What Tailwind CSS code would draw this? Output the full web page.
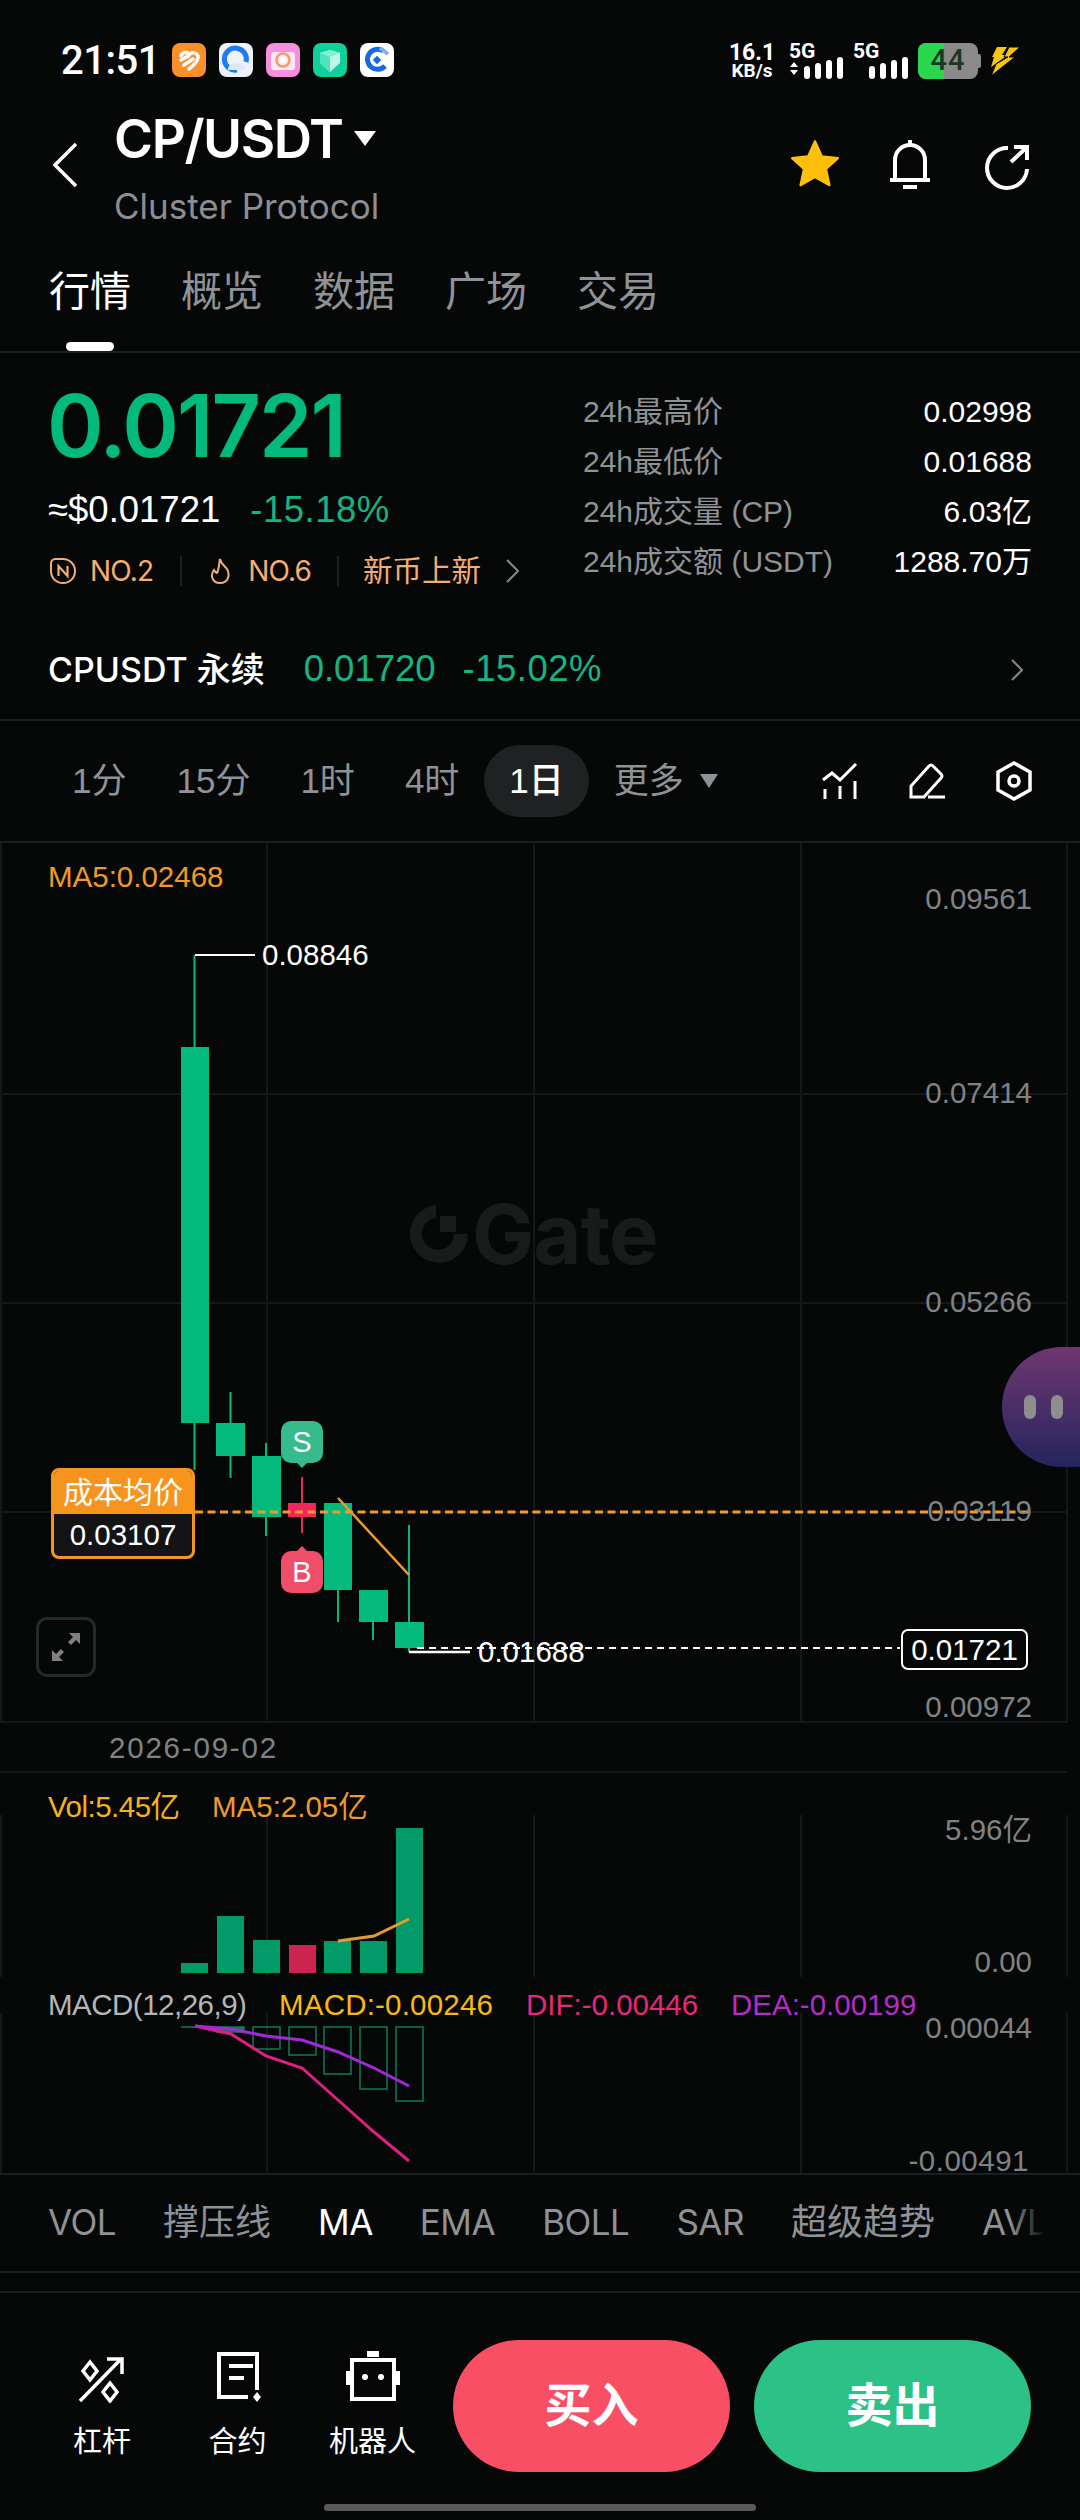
<!DOCTYPE html>
<html lang="zh">
<head>
<meta charset="utf-8">
<script src="https://cdn.jsdelivr.net/npm/@tailwindcss/browser@4"></script>
</head>
<body class="bg-[#060808]">
<div class="w-[1080px] h-[2520px] overflow-hidden bg-[#060808] text-white [font-family:'Liberation_Sans','Noto_Sans_CJK_SC',sans-serif]">

  <!-- status bar -->
  <div class="h-[100px] flex items-start pt-[43px] pl-[61px] pr-[60px]">
    <div class="text-[40px] leading-[36px] font-medium tracking-[-0.5px] w-[111px] [font-family:Roboto,sans-serif]">21:51</div>
    <div class="flex gap-[13px]">
      <svg class="w-[34px] h-[34px]" viewBox="0 0 34 34"><rect width="34" height="34" rx="8" fill="#fb8f2e"/><path d="M9 13c2-5 7-4 8-1 2-3 7-3 9 1 1 4-5 10-9 13" fill="none" stroke="#fff" stroke-width="3.500" stroke-linecap="round"/><path d="M9 17l7-4M12 22l9-6" stroke="#fff" stroke-width="3.500" stroke-linecap="round"/></svg>
      <svg class="w-[34px] h-[34px]" viewBox="0 0 34 34"><rect width="34" height="34" rx="8" fill="#eef3fa"/><path d="M27 19a11 11 0 1 0-9 8" fill="none" stroke="#1f7bf2" stroke-width="5"/><path d="M9 27c0-5 5-8 9-6 3-2 8 0 8 6z" fill="#dfe9f6"/></svg>
      <svg class="w-[34px] h-[34px]" viewBox="0 0 34 34"><rect width="34" height="34" rx="8" fill="#f68fdc"/><rect x="5" y="9" width="24" height="18" rx="3" fill="#fde6f6"/><circle cx="17" cy="17" r="6.500" fill="none" stroke="#f59a6c" stroke-width="2.500"/><circle cx="17" cy="17" r="3" fill="#fff"/></svg>
      <svg class="w-[34px] h-[34px]" viewBox="0 0 34 34"><rect width="34" height="34" rx="8" fill="#0fcf9d"/><path d="M7 10l10-3 10 3v10l-10 9-10-9z" fill="#bdf6e6"/><path d="M7 10l10 4 10-4-10-3z" fill="#7fefd2"/><path d="M17 14v15l-10-9V10z" fill="#4fe3bd"/></svg>
      <svg class="w-[34px] h-[34px]" viewBox="0 0 34 34"><rect width="34" height="34" rx="8" fill="#fff"/><path d="M25 23a10 10 0 1 1-2-15" fill="none" stroke="#1769e0" stroke-width="5"/><rect x="14" y="14" width="6" height="6" transform="rotate(45 17 17)" fill="#1769e0"/><path d="M20 5l8 6" stroke="#7fb0f0" stroke-width="4"/></svg>
    </div>
    <div class="ml-auto flex items-start">
      <div class="w-[44px] flex flex-col items-center font-bold [font-family:Roboto,sans-serif]"><span class="text-[23px] leading-[20px]">16.1</span><span class="text-[19px] leading-[16px]">KB/s</span></div>
      <div class="ml-[15px] w-[54px] relative h-[36px]">
        <span class="absolute left-0 top-0 text-[21px] leading-[16px] font-bold [font-family:Roboto,sans-serif]">5G</span>
        <svg class="absolute left-0 top-[14px]" width="54" height="22" viewBox="0 0 54 22"><path d="M1 10l4-5 4 5zM1 13l4 5 4-5z" fill="#fff"/><rect x="15" y="9" width="6" height="13" rx="3" fill="#fff"/><rect x="26" y="6" width="6" height="16" rx="3" fill="#fff"/><rect x="37" y="3" width="6" height="19" rx="3" fill="#fff"/><rect x="48" y="0" width="6" height="22" rx="3" fill="#fff"/></svg>
      </div>
      <div class="ml-[10px] w-[55px] relative h-[36px]">
        <span class="absolute left-0 top-0 text-[21px] leading-[16px] font-bold [font-family:Roboto,sans-serif]">5G</span>
        <svg class="absolute left-0 top-[14px]" width="55" height="22" viewBox="0 0 55 22"><rect x="16" y="9" width="6" height="13" rx="3" fill="#fff"/><rect x="27" y="6" width="6" height="16" rx="3" fill="#fff"/><rect x="38" y="3" width="6" height="19" rx="3" fill="#fff"/><rect x="49" y="0" width="6" height="22" rx="3" fill="#fff"/></svg>
      </div>
      <div class="ml-[10px] w-[63px] h-[36px] flex items-center">
        <div class="w-[60px] h-[36px] rounded-[8px] overflow-hidden flex bg-[#8a8a8a] relative">
          <div class="w-[26px] bg-[#2bd64f]"></div>
          <span class="absolute inset-0 flex items-center justify-center text-[29px] font-medium tracking-[1px] text-[#1f3524] [font-family:Roboto,sans-serif]">44</span>
        </div>
        <div class="w-[3px] h-[14px] bg-[#8a8a8a] rounded-r-[2px]"></div>
      </div>
      <svg class="ml-[9px] mt-[3px]" width="30" height="30" viewBox="0 0 30 30"><path d="M7 1h10L12 9h6L1 21 4 11H2z" fill="#f6c411"/><path d="M19 1h11L19 11h6L1 30l5-12 12-7h-4z" fill="#f6c411" stroke="#060808" stroke-width="1"/></svg>
    </div>
  </div>

  <!-- header -->
  <div class="h-[140px] flex pl-[53px] pr-[50px] [font-family:Inter,sans-serif]">
    <svg class="w-[24px] h-[46px] mt-[42px]" viewBox="0 0 24 46" fill="none" stroke="#fff" stroke-width="3.500"><path d="M23 2L2 23l21 21"/></svg>
    <div class="ml-[37px] flex flex-col">
      <div class="flex items-center mt-[12px]">
        <span class="text-[53px] leading-[54px] font-semibold tracking-[-1.400px]">CP/USDT</span>
        <svg class="ml-[11px] mt-[-2px]" width="22" height="15" viewBox="0 0 22 15"><path d="M0 0h22L11 15z" fill="#fff"/></svg>
      </div>
      <div class="text-[35px] leading-[40px] mt-[20px] text-[#8b8e93]">Cluster Protocol</div>
    </div>
    <div class="ml-auto flex items-start mt-[38px]">
      <svg class="w-[52px] h-[52px]" viewBox="0 0 24 24"><path d="M12 1.500l3.200 7 7.400.8-5.500 5 1.600 7.500L12 18l-6.700 3.800 1.600-7.500-5.500-5 7.400-.8z" fill="#ffbf0a" stroke="#ffbf0a" stroke-linejoin="round"/></svg>
      <svg class="ml-[47px] w-[44px] h-[52px]" viewBox="0 0 44 52" fill="none" stroke="#fff" stroke-width="4"><path d="M2 42h40M7 42V22a15 15 0 0 1 30 0v20M22 7V2M15 49h14"/></svg>
      <svg class="ml-[52px] w-[46px] h-[46px] mt-[6px]" viewBox="0 0 46 46" fill="none" stroke="#fff" stroke-width="4"><path d="M24 4A20 20 0 1 0 43 25M27 18L43 3M30 3h13v13"/></svg>
    </div>
  </div>

  <!-- tabs -->
  <div class="h-[113px] border-b-2 border-[#1c1f21] pt-[31px] pl-[49px] flex gap-[50px] text-[41px] leading-[42px] text-[#8f9296]">
    <div class="flex flex-col items-center text-white"><span>行情</span><span class="mt-[29px] w-[48px] h-[9px] rounded-full bg-white"></span></div>
    <span>概览</span><span>数据</span><span>广场</span><span>交易</span>
  </div>

  <!-- price block -->
  <div class="h-[267px] flex">
    <div class="w-[583px] pl-[47px] pt-[30px]">
      <div class="text-[86px] leading-[86px] font-semibold tracking-[-2px] text-[#02ba7c] [font-family:Inter,sans-serif]">0.01721</div>
      <div class="mt-[20px] h-[42px] flex items-center leading-[42px]"><span class="ml-[1px] text-[36.500px]">≈$0.01721</span><span class="ml-[30px] text-[36.500px] tracking-[0.5px] text-[#14b484]">-15.18%</span></div>
      <div class="mt-[25px] h-[30px] flex items-center text-[28px] leading-[30px] text-[#f4ae74]">
        <svg class="ml-[3px] w-[26px] h-[26px]" viewBox="0 0 26 26" fill="none" stroke="#f4ae74" stroke-width="2"><path d="M13 1a12 12 0 0 1 12 12c0 7-5 12-12 12S1 20 1 13V5c0-2 2-4 4-4z"/><path d="M8.500 18V8l9 10V8" stroke-width="2.200"/></svg>
        <span class="ml-[14px] tracking-[-0.8px] [font-family:Inter,sans-serif]">NO.2</span>
        <span class="ml-[27px] w-[2px] h-[30px] bg-[#1e2022]"></span>
        <svg class="ml-[28px] w-[21px] h-[26px]" viewBox="0 0 21 26" fill="none" stroke="#f4ae74" stroke-width="2"><path d="M10 1c1 5 4 6 7 10 3 5 2 14-7 14C2 25 0 17 4 12c1 2 2 3 3 3 2-4 2-9 3-14z"/></svg>
        <span class="ml-[17px] tracking-[-0.8px] [font-family:Inter,sans-serif]">NO.6</span>
        <span class="ml-[26px] w-[2px] h-[30px] bg-[#1e2022]"></span>
        <span class="ml-[24px] text-[29.500px]">新币上新</span>
        <svg class="ml-[25px] w-[13px] h-[24px]" viewBox="0 0 13 24" fill="none" stroke="#85878a" stroke-width="2"><path d="M1 1l11 11L1 23"/></svg>
      </div>
    </div>
    <div class="flex-1 pt-[34px] pr-[48px] text-[30px] leading-[50px]">
      <div class="flex justify-between"><span class="text-[#8f9296]">24h最高价</span><span>0.02998</span></div>
      <div class="flex justify-between"><span class="text-[#8f9296]">24h最低价</span><span>0.01688</span></div>
      <div class="flex justify-between"><span class="text-[#8f9296]">24h成交量 (CP)</span><span>6.03亿</span></div>
      <div class="flex justify-between"><span class="text-[#8f9296]">24h成交额 (USDT)</span><span>1288.70万</span></div>
    </div>
  </div>

  <!-- perp row -->
  <div class="h-[101px] border-b-2 border-[#1c1f21] flex items-center pl-[48px] pr-[57px] text-[36.500px]">
    <span class="font-medium text-[34px] [font-family:Inter,'Noto_Sans_CJK_SC',sans-serif]">CPUSDT 永续</span>
    <span class="ml-[39px] text-[#14b484]">0.01720</span>
    <span class="ml-[27px] tracking-[0.5px] text-[#14b484]">-15.02%</span>
    <svg class="ml-auto w-[12px] h-[22px]" viewBox="0 0 12 22" fill="none" stroke="#85878a" stroke-width="2"><path d="M1 1l10 10L1 21"/></svg>
  </div>

  <!-- timeframe row -->
  <div class="h-[122px] border-b-2 border-[#1c1f21] flex items-center pl-[47px] pr-[48px] text-[35px] leading-[72px] text-[#8f9296]">
    <span class="px-[25px]">1分</span>
    <span class="px-[25px]">15分</span>
    <span class="px-[25px]">1时</span>
    <span class="px-[25px]">4时</span>
    <span class="px-[25px] h-[72px] rounded-full bg-[#1f2122] text-white font-medium">1日</span>
    <span class="px-[25px]">更多</span>
    <svg class="-ml-[9px]" width="18" height="14" viewBox="0 0 18 14"><path d="M0 0h18L9 14z" fill="#8f9296"/></svg>
    <div class="ml-auto flex items-center gap-[51px]">
      <svg class="w-[36px] h-[36px]" viewBox="0 0 36 36" fill="none" stroke="#fff" stroke-width="3"><path d="M1 17l9-7 8 7L34 1M3 26v10M18 23v13M33 18v18"/></svg>
      <svg class="w-[36px] h-[36px]" viewBox="0 0 36 36" fill="none" stroke="#fff" stroke-width="3"><path d="M2 34V23L20 3q2-2 4 0l8 8q2 2 0 4L15 34zM19 34h17"/></svg>
      <svg class="w-[36px] h-[40px]" viewBox="0 0 36 40" fill="none" stroke="#fff" stroke-width="3.500"><path d="M18 2l16 9v18l-16 9-16-9V11z"/><circle cx="18" cy="20" r="5"/></svg>
    </div>
  </div>

  <!-- chart canvas -->
  <div class="relative h-[1332px] border-b-2 border-[#1c1f21] text-[29.500px] leading-[32px]">
    <svg class="absolute inset-0" width="1080" height="1332" viewBox="0 843 1080 1332">
      <g stroke="#15181a" stroke-width="2" fill="none">
        <path d="M1 843V1722M267 843V1722M534 843V1722M801 843V1722M1067 843V1722"/>
        <path d="M0 1094H1067M0 1303H1067M0 1512H1067M0 1722H1067M0 1772H1067"/>
        <path d="M1 1815V1977M267 1815V1977M534 1815V1977M801 1815V1977M1067 1815V1977"/>
        <path d="M1 2013V2174M267 2013V2174M534 2013V2174M801 2013V2174M1067 2013V2174"/>
      </g>
      <!-- candles -->
      <g fill="#02ba7c">
        <rect x="193.500" y="955" width="2" height="92"/><rect x="193.500" y="1423" width="2" height="47"/><rect x="181" y="1047" width="28" height="376"/>
        <rect x="229.500" y="1392" width="2" height="86"/><rect x="216" y="1423" width="29" height="33"/>
        <rect x="265" y="1443" width="2" height="93"/><rect x="252" y="1456" width="29" height="61"/>
        <rect x="337" y="1503" width="2" height="119"/><rect x="324" y="1503" width="28" height="87"/>
        <rect x="372" y="1590" width="2" height="50"/><rect x="359" y="1590" width="29" height="32"/>
        <rect x="408" y="1525" width="2" height="127"/><rect x="395" y="1622" width="29" height="26"/>
      </g>
      <g fill="#f0265c"><rect x="301" y="1477" width="2" height="56"/><rect x="288" y="1503" width="28" height="14"/></g>
      <path d="M338 1498L409 1575" stroke="#f09a2a" stroke-width="2.500" fill="none"/>
      <path d="M195 1512H1029" stroke="#f2992e" stroke-width="3" stroke-dasharray="8 4.500" fill="none"/>
      <path d="M195 955H255" stroke="#fff" stroke-width="2" fill="none"/>
      <path d="M409 1652H470" stroke="#fff" stroke-width="2.500" fill="none"/>
      <path d="M417 1648H900" stroke="#fff" stroke-width="2" stroke-dasharray="7 5" fill="none"/>
      <!-- volume bars -->
      <g fill="#019a68">
        <rect x="181" y="1963" width="27" height="10"/><rect x="217" y="1916" width="27" height="57"/><rect x="253" y="1940" width="27" height="33"/>
        <rect x="324" y="1941" width="27" height="32"/><rect x="360" y="1941" width="27" height="32"/><rect x="396" y="1828" width="27" height="145"/>
      </g>
      <rect x="289" y="1945" width="27" height="28" fill="#cc2450"/>
      <path d="M338 1941L374 1936L409 1919" stroke="#e59a2e" stroke-width="3" fill="none"/>
      <!-- macd -->
      <g fill="none" stroke="#0f7a5a" stroke-width="1.500">
        <path d="M181 2027H208"/>
        <rect x="217" y="2027" width="27" height="5" fill="#0f7a5a"/>
        <rect x="253" y="2027" width="27" height="22"/>
        <rect x="289" y="2027" width="27" height="28"/>
        <rect x="324" y="2027" width="27" height="47"/>
        <rect x="360" y="2027" width="27" height="62"/>
        <rect x="396" y="2027" width="27" height="74"/>
      </g>
      <path d="M195 2026L231 2034L266 2056L302 2068L338 2100L374 2132L409 2161" stroke="#e0207f" stroke-width="3" fill="none"/>
      <path d="M195 2026L231 2029L266 2036L302 2040L338 2052L374 2068L409 2086" stroke="#a428d8" stroke-width="3" fill="none"/>
    </svg>

    <!-- watermark -->
    <div class="absolute left-[410px] top-[362px] flex items-center text-[#181b1c] [font-family:Inter,sans-serif]">
      <svg class="w-[58px] h-[58px]" viewBox="0 0 58 58" fill="none"><path d="M26 0v13a16 16 0 1 0 18 16h14A29 29 0 1 1 26 0z" fill="#181b1c"/><rect x="30" y="11" width="16" height="16" fill="#181b1c"/></svg>
      <span class="ml-[4px] text-[83px] leading-[58px] font-bold tracking-[-1px]">Gate</span>
    </div>

    <!-- main labels -->
    <span class="absolute left-[48px] top-[34px] -translate-y-1/2 text-[#f0982a]">MA5:0.02468</span>
    <span class="absolute left-[262px] top-[112px] -translate-y-1/2 text-white">0.08846</span>
    <span class="absolute left-[478px] top-[809px] -translate-y-1/2 text-white">0.01688</span>
    <span class="absolute right-[48px] top-[56px] -translate-y-1/2 text-[#808385]">0.09561</span>
    <span class="absolute right-[48px] top-[250px] -translate-y-1/2 text-[#808385]">0.07414</span>
    <span class="absolute right-[48px] top-[459px] -translate-y-1/2 text-[#808385]">0.05266</span>
    <span class="absolute right-[48px] top-[668px] -translate-y-1/2 text-[#808385]">0.03119</span>
    <span class="absolute right-[48px] top-[864px] -translate-y-1/2 text-[#808385]">0.00972</span>
    <span class="absolute left-[901px] top-[786px] w-[127px] h-[41px] rounded-[7px] border-2 border-white bg-[#060808] flex items-center justify-center">0.01721</span>

    <!-- S / B markers -->
    <div class="absolute left-[281px] top-[578px] w-[42px] h-[42px] rounded-[10px] bg-[#36bc8c] flex items-center justify-center text-[29px]">S</div>
    <div class="absolute left-[297px] top-[620px] w-0 h-0 border-x-[5px] border-x-transparent border-t-[5px] border-t-[#36bc8c]"></div>
    <div class="absolute left-[281px] top-[708px] w-[42px] h-[42px] rounded-[10px] bg-[#f04d69] flex items-center justify-center text-[29px]">B</div>
    <div class="absolute left-[297px] top-[703px] w-0 h-0 border-x-[5px] border-x-transparent border-b-[5px] border-b-[#f04d69]"></div>

    <!-- cost tag -->
    <div class="absolute left-[51px] top-[625px] w-[144px] h-[91px] rounded-[8px] border-[3px] border-[#f7941e] bg-[#141416] overflow-hidden flex flex-col">
      <div class="h-[43px] bg-[#f7941e] flex items-center justify-center text-[30px]">成本均价</div>
      <div class="flex-1 flex items-center justify-center">0.03107</div>
    </div>

    <!-- expand -->
    <div class="absolute left-[36px] top-[774px] w-[60px] h-[60px] rounded-[11px] border-[3px] border-[#26282a] flex items-center justify-center">
      <svg width="30" height="30" viewBox="0 0 30 30" fill="#808080"><path d="M18 1h11v11l-4-4-5 5-3-3 5-5zM12 29H1V18l4 4 5-5 3 3-5 5z"/></svg>
    </div>

    <!-- floating -->
    <div class="absolute left-[1002px] top-[504px] w-[78px] h-[120px] rounded-l-[60px] bg-gradient-to-b from-[#6f3670] to-[#24245e] flex items-center pl-[22px] gap-[15px]">
      <span class="w-[12px] h-[24px] rounded-full bg-[#8e8e8e]"></span>
      <span class="w-[12px] h-[24px] rounded-full bg-[#8e8e8e]"></span>
    </div>

    <!-- lower labels -->
    <span class="absolute left-[109px] top-[905px] -translate-y-1/2 text-[#808385] tracking-[1.800px]">2026-09-02</span>
    <span class="absolute left-[48px] top-[964px] -translate-y-1/2 text-[#f5b21c] tracking-[-0.5px]">Vol:5.45亿</span>
    <span class="absolute left-[212px] top-[964px] -translate-y-1/2 text-[#ee9a2c]">MA5:2.05亿</span>
    <span class="absolute right-[48px] top-[987px] -translate-y-1/2 text-[#808385]">5.96亿</span>
    <span class="absolute right-[48px] top-[1119px] -translate-y-1/2 text-[#808385]">0.00</span>
    <span class="absolute left-[48px] top-[1162px] -translate-y-1/2 text-[#b4b6b8] tracking-[-0.5px]">MACD(12,26,9)</span>
    <span class="absolute left-[279px] top-[1162px] -translate-y-1/2 text-[#fbb90f] tracking-[0.2px]">MACD:-0.00246</span>
    <span class="absolute left-[526px] top-[1162px] -translate-y-1/2 text-[#e8267c]">DIF:-0.00446</span>
    <span class="absolute left-[731px] top-[1162px] -translate-y-1/2 text-[#b52cc8]">DEA:-0.00199</span>
    <span class="absolute right-[48px] top-[1185px] -translate-y-1/2 text-[#808385]">0.00044</span>
    <span class="absolute right-[51px] top-[1318px] -translate-y-1/2 text-[#808385] tracking-[0.5px]">-0.00491</span>
  </div>

  <!-- indicators -->
  <div class="relative h-[98px] border-b-2 border-[#1c1f21] flex items-center pl-[48px] gap-[47px] text-[35px] text-[#8f9296] whitespace-nowrap overflow-hidden pb-[2px] [font-family:Inter,'Noto_Sans_CJK_SC',sans-serif]">
    <span class="tracking-[-0.5px]">VOL</span><span class="text-[36px]">撑压线</span><span class="text-white tracking-[-0.5px]">MA</span><span class="tracking-[-0.5px]">EMA</span><span class="tracking-[-0.5px]">BOLL</span><span class="tracking-[-0.5px]">SAR</span><span class="text-[36px]">超级趋势</span><span class="tracking-[-0.5px]">AVL</span>
    <div class="absolute right-0 top-0 bottom-0 w-[70px] bg-gradient-to-r from-transparent via-[#060808] to-[#060808]"></div>
  </div>
  <div class="h-[20px] border-b-2 border-[#1c1f21]"></div>

  <!-- bottom bar -->
  <div class="h-[226px] pt-[47px]">
    <div class="flex items-start pl-[35px]">
      <div class="w-[135px] flex flex-col items-center text-[29px] leading-[30px]">
        <svg class="-ml-[4px] w-[48px] h-[48px] mt-[15px]" viewBox="0 0 48 48" fill="none" stroke="#fff" stroke-width="3.500"><path d="M3 46L44 4M30 4h15v15M13 7l7 9-7 9-7-9zM33 28l7 9-7 9-7-9z"/></svg>
        <span class="mt-[24px] -ml-[1px]">杠杆</span>
      </div>
      <div class="w-[135px] flex flex-col items-center text-[29px] leading-[30px]">
        <svg class="w-[48px] h-[52px] mt-[11px]" viewBox="0 0 48 52" fill="none" stroke="#fff" stroke-width="4"><path d="M34 46H5V3h38v36M15 15h24M15 27h15"/><path d="M43 41l4 5-4 5-4-5z" fill="#fff" stroke="none"/></svg>
        <span class="mt-[24px]">合约</span>
      </div>
      <div class="w-[135px] flex flex-col items-center text-[29px] leading-[30px]">
        <svg class="w-[54px] h-[50px] mt-[11px]" viewBox="0 0 54 50" fill="none" stroke="#fff" stroke-width="4"><path d="M6 9h42v39H6zM27 9V7"/><rect x="21" y="0" width="12" height="6" fill="#fff" stroke="none"/><path d="M2 20v14M52 20v14" stroke-width="4"/><circle cx="19" cy="26" r="3" fill="#fff" stroke="none"/><circle cx="35" cy="26" r="3" fill="#fff" stroke="none"/></svg>
        <span class="mt-[26px]">机器人</span>
      </div>
      <div class="ml-[13px] w-[277px] h-[132px] rounded-full bg-[#f94f64] flex items-center justify-center text-[47px] font-bold">买入</div>
      <div class="ml-[24px] w-[277px] h-[132px] rounded-full bg-[#2cc287] flex items-center justify-center text-[47px] font-bold">卖出</div>
    </div>
    <div class="mt-[32px] mx-auto w-[432px] h-[7px] rounded-full bg-[#5a5a5a]"></div>
  </div>
</div>
</body>
</html>
